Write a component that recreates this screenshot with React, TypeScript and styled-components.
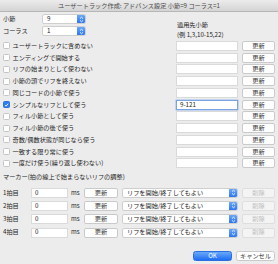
import React from 'react';
import styled, { createGlobalStyle } from 'styled-components';

const GlobalStyle = createGlobalStyle`
  html, body {
    margin: 0;
    padding: 0;
    background: #ececec;
  }
  body {
    font-family: "Noto Sans CJK JP", "Noto Sans", sans-serif;
    color: #1c1c1c;
  }
`;

const Window = styled.div`
  width: 278px;
  height: 264px;
  background: #ececec;
  display: flex;
  flex-direction: column;
  overflow: hidden;
  box-sizing: border-box;
  font-size: 6.2px;
  line-height: 1;
`;

const TitleBar = styled.div`
  height: 11px;
  line-height: 11px;
  text-align: center;
  background: linear-gradient(#ececec, #d4d4d4);
  border-bottom: 1px solid #b6b6b6;
  color: #4a4a4a;
  font-size: 6.2px;
  white-space: nowrap;
`;

const Content = styled.div`
  flex: 1;
  display: flex;
  flex-direction: column;
  padding: 2px 3px 3px 3px;
`;

const Top = styled.div`
  display: grid;
  grid-template-columns: 174px 1fr;
`;

const SpinRows = styled.div`
  display: flex;
  flex-direction: column;
  gap: 2px;
`;

const SpinRow = styled.div`
  display: flex;
  align-items: center;
  height: 10px;
`;

const SpinLabel = styled.span`
  width: 39px;
`;

const SelectBox = styled.div<{ $w: number }>`
  width: ${p => p.$w}px;
  height: 10px;
  box-sizing: border-box;
  background: #fff;
  border: 1px solid #cfcfcf;
  border-radius: 2px;
  display: flex;
  align-items: center;
  padding-left: 4px;
  position: relative;
  overflow: hidden;
  white-space: nowrap;
`;

const SpinCap = styled.div`
  position: absolute;
  right: 0;
  top: 0;
  bottom: 0;
  width: 8px;
  background: linear-gradient(#6aa8fb, #2c76f3);
  border-radius: 0 1px 1px 0;
  display: flex;
  align-items: center;
  justify-content: center;
`;

const HintBlock = styled.div`
  padding-top: 8px;
  display: flex;
  flex-direction: column;
  gap: 3.5px;
  white-space: nowrap;
`;

const List = styled.div`
  margin-top: 3px;
  display: grid;
  grid-template-columns: 169px 62px 33px;
  column-gap: 4px;
  row-gap: 1.75px;
  grid-auto-rows: 10px;
  align-items: center;
`;

const CheckRow = styled.label`
  display: flex;
  align-items: center;
  gap: 2.5px;
  white-space: nowrap;
`;

const Box = styled.span<{ $on?: boolean }>`
  width: 7px;
  height: 7px;
  box-sizing: border-box;
  border-radius: 1.5px;
  background: ${p => (p.$on ? '#2f7ef4' : '#fff')};
  border: 1px solid ${p => (p.$on ? '#2a70e0' : '#c4c4c4')};
  display: flex;
  align-items: center;
  justify-content: center;
`;

const TextInput = styled.div<{ $focus?: boolean }>`
  height: 10px;
  box-sizing: border-box;
  background: #fff;
  border: 1px solid ${p => (p.$focus ? '#7ba3e3' : '#dadada')};
  box-shadow: ${p => (p.$focus ? '0 0 0 0.6px #a8c4f0' : 'none')};
  display: flex;
  align-items: center;
  padding-left: 3px;
  white-space: nowrap;
`;

const Button = styled.div<{ $disabled?: boolean; $w?: number }>`
  width: ${p => (p.$w ? `${p.$w}px` : 'auto')};
  height: 10px;
  box-sizing: border-box;
  background: ${p => (p.$disabled ? '#f4f4f4' : '#fff')};
  border: 1px solid ${p => (p.$disabled ? '#dedede' : '#cacaca')};
  border-radius: 2px;
  color: ${p => (p.$disabled ? '#bdbdbd' : '#333')};
  display: flex;
  align-items: center;
  justify-content: center;
  white-space: nowrap;
`;

const SectionTitle = styled.div`
  margin-top: 6px;
  white-space: nowrap;
`;

const Markers = styled.div`
  margin-top: 7px;
  display: grid;
  grid-template-columns: 28px 37px 16px 34px 120px 37px;
  grid-auto-rows: 10px;
  row-gap: 3.3px;
  align-items: center;
`;

const Unit = styled.span`
  padding-left: 3px;
`;

const EndCell = styled.div`
  justify-self: end;
`;

const Footer = styled.div`
  margin-top: auto;
  display: flex;
  justify-content: flex-end;
  gap: 4px;
`;

const DialogButton = styled.div<{ $primary?: boolean }>`
  width: 39px;
  height: 10px;
  box-sizing: border-box;
  border-radius: 2.5px;
  display: flex;
  align-items: center;
  justify-content: center;
  white-space: nowrap;
  background: ${p => (p.$primary ? 'linear-gradient(#69a9fb, #1f6ef3)' : '#fff')};
  border: 1px solid ${p => (p.$primary ? '#2a6fe0' : '#cacaca')};
  color: ${p => (p.$primary ? '#fff' : '#333')};
`;

const Arrows = () => (
  <svg width="5" height="7" viewBox="0 0 5 7">
    <path d="M1 2.6 L2.5 1.2 L4 2.6 M1 4.4 L2.5 5.8 L4 4.4" stroke="#fff" strokeWidth="0.9" fill="none" />
  </svg>
);

const Check = () => (
  <svg width="6" height="6" viewBox="0 0 6 6">
    <path d="M1.2 3.1 L2.5 4.4 L4.9 1.5" stroke="#fff" strokeWidth="1.1" fill="none" />
  </svg>
);

const options = [
  'ユーザートラックに含めない',
  'エンディングで開始する',
  'リフの始まりとして使わない',
  '小節の頭でリフを終えない',
  '同じコードの小節で使う',
  'シンプルなリフとして使う',
  'フィル小節として使う',
  'フィル小節の後で使う',
  '奇数/偶数状態が同じなら使う',
  '一致する限り常に使う',
  '一度だけ使う(繰り返し使わない)',
];

const beats = ['1拍目', '2拍目', '3拍目', '4拍目'];

export default function App() {
  return (
    <Window>
      <GlobalStyle />
      <TitleBar>ユーザートラック作成: アドバンス設定 小節=9 コーラス=1</TitleBar>
      <Content>
        <Top>
          <SpinRows>
            <SpinRow>
              <SpinLabel>小節</SpinLabel>
              <SelectBox $w={44}>
                9
                <SpinCap><Arrows /></SpinCap>
              </SelectBox>
            </SpinRow>
            <SpinRow>
              <SpinLabel>コーラス</SpinLabel>
              <SelectBox $w={44}>
                1
                <SpinCap><Arrows /></SpinCap>
              </SelectBox>
            </SpinRow>
          </SpinRows>
          <HintBlock>
            <span>適用先小節</span>
            <span>(例 1,3,10-15,22)</span>
          </HintBlock>
        </Top>

        <List>
          {options.map((label, i) => {
            const on = i === 5;
            return (
              <React.Fragment key={label}>
                <CheckRow>
                  <Box $on={on}>{on && <Check />}</Box>
                  {label}
                </CheckRow>
                <TextInput $focus={on}>{on ? '9-121' : ''}</TextInput>
                <Button>更新</Button>
              </React.Fragment>
            );
          })}
        </List>

        <SectionTitle>マーカー(拍の線上で始まらないリフの調整)</SectionTitle>

        <Markers>
          {beats.map(b => (
            <React.Fragment key={b}>
              <span>{b}</span>
              <TextInput>0</TextInput>
              <Unit>ms</Unit>
              <Button>更新</Button>
              <EndCell>
                <SelectBox $w={116}>
                  リフを開始/終了してもよい
                  <SpinCap><Arrows /></SpinCap>
                </SelectBox>
              </EndCell>
              <EndCell>
                <Button $disabled $w={33}>削除</Button>
              </EndCell>
            </React.Fragment>
          ))}
        </Markers>

        <Footer>
          <DialogButton $primary>OK</DialogButton>
          <DialogButton>キャンセル</DialogButton>
        </Footer>
      </Content>
    </Window>
  );
}
